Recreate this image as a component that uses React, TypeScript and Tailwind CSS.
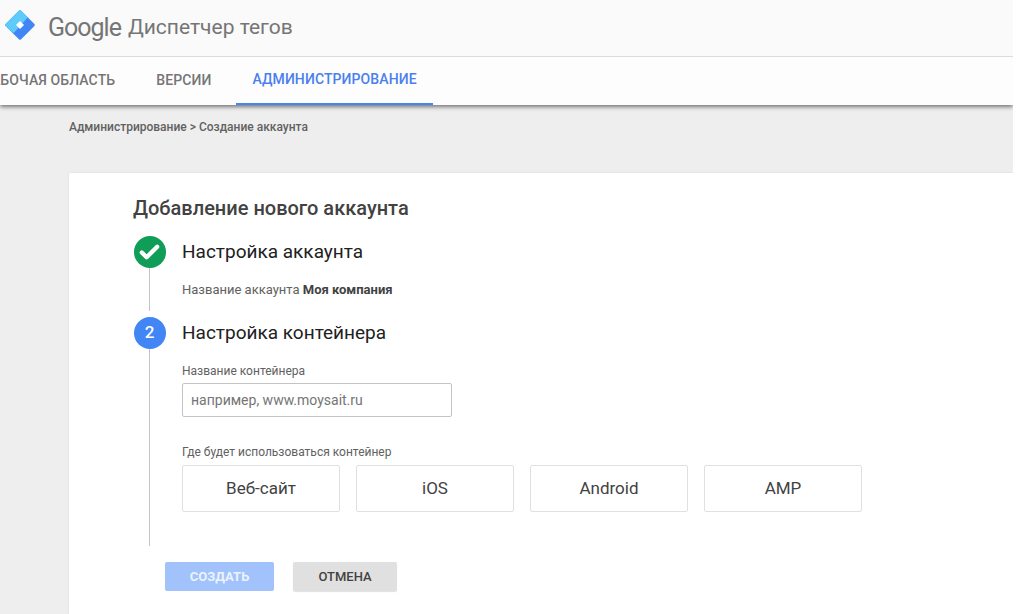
import React from 'react';
import { Check } from 'lucide-react';

const roboto = { fontFamily: 'Roboto, sans-serif' };

const tabs = [
  { name: 'РАБОЧАЯ ОБЛАСТЬ', active: false },
  { name: 'ВЕРСИИ', active: false },
  { name: 'АДМИНИСТРИРОВАНИЕ', active: true },
];

const targets = ['Веб-сайт', 'iOS', 'Android', 'AMP'];

const Logo = () => (
  <svg width="30" height="30" viewBox="0 0 30 30" className="shrink-0">
    <path d="M15 1.5 L28.5 15 L15 28.5 L1.5 15 Z" fill="#4285f4" stroke="#4285f4" strokeWidth="2.5" strokeLinejoin="round" />
    <path d="M15 1.5 L21 7.5 L8.5 21.5 L1.5 15 Z" fill="#5ecbfb" stroke="#5ecbfb" strokeWidth="2.5" strokeLinejoin="round" />
    <path d="M15 11 L19 15 L15 19 L11 15 Z" fill="#ffffff" />
  </svg>
);

const App: React.FC = () => {
  return (
    <div className="h-[614px] w-[1019px] overflow-hidden bg-white" style={roboto}>
      <div className="h-full w-[1013px] overflow-hidden bg-[#eeeeee] flex flex-col">
        {/* Header */}
        <header className="relative z-10 h-[105px] shrink-0 bg-[#fdfdfd] shadow-[0_2px_4px_rgba(0,0,0,0.5)]">
          <div className="h-[57px] flex items-start gap-[13px] pl-[5px] pt-[10px] bg-[#fafafa] border-b border-[#dcdcdc]">
            <Logo />
            <div className="h-[34px] flex items-center gap-[7px] text-[#757575]">
              <span className="text-[25px] tracking-[-1px] leading-none">Google</span>
              <span className="text-[21px] leading-none">Диспетчер тегов</span>
            </div>
          </div>
          <nav className="h-[48px] flex gap-[9px] -ml-[33px]">
            {tabs.map((tab) => (
              <a
                key={tab.name}
                className={`h-full px-4 flex items-center text-sm font-medium tracking-[0.1px] pb-[2px] ${
                  tab.active ? 'text-[#4a7ff0] border-b-2 border-[#4285f4]' : 'text-[#757575]'
                }`}
              >
                {tab.name}
              </a>
            ))}
          </nav>
        </header>

        {/* Breadcrumb */}
        <div className="h-[68px] shrink-0 pl-[69px] pt-[15px] text-xs font-medium leading-[14px] text-[#616161]">
          Администрирование &gt; Создание аккаунта
        </div>

        {/* Card */}
        <main className="ml-[69px] flex-1 bg-white rounded-tl-[2px] pl-[64px] shadow-[0_0_2px_rgba(0,0,0,0.12)]">
          <h1 className="pt-[23px] text-[20px] leading-[24px] font-medium text-[#424242]">Добавление нового аккаунта</h1>

          <section className="mt-4 flex gap-4">
            <div className="w-[33px] shrink-0 flex flex-col items-center">
              <div className="size-8 rounded-full bg-[#0f9d58] flex items-center justify-center">
                <Check size={23} strokeWidth={4.5} className="text-white" />
              </div>
              <div className="w-px h-[43px] bg-[#c4c4c4]" />
            </div>
            <div>
              <div className="h-8 flex items-center text-[19px] text-[#212121]">Настройка аккаунта</div>
              <p className="mt-[15px] text-[13px] leading-[14px] text-[#616161]">
                Название аккаунта <b className="font-bold text-[#424242]">Моя компания</b>
              </p>
            </div>
          </section>

          <section className="mt-[6px] flex gap-4">
            <div className="w-[33px] shrink-0 flex flex-col items-center">
              <div className="size-8 rounded-full bg-[#4285f4] flex items-center justify-center text-[17px] font-medium text-white">2</div>
              <div className="w-px h-[197px] bg-[#c4c4c4]" />
            </div>
            <div>
              <div className="h-8 flex items-center text-[19px] text-[#212121]">Настройка контейнера</div>
              <label className="block mt-[15px] text-xs leading-[14px] text-[#616161]">Название контейнера</label>
              <input
                placeholder="например, www.moysait.ru"
                className="mt-[5px] block w-[270px] h-[34px] px-2 border border-[#c4c4c4] rounded-[2px] text-sm outline-none placeholder:text-[#757575]"
              />
              <label className="block mt-[28px] text-xs leading-[14px] text-[#616161]">Где будет использоваться контейнер</label>
              <div className="mt-[6px] flex gap-4">
                {targets.map((t) => (
                  <button
                    key={t}
                    className="w-[158px] h-[47px] border border-[#e0e0e0] rounded-[2px] bg-white text-[17px] text-[#424242]"
                  >
                    {t}
                  </button>
                ))}
              </div>
            </div>
          </section>

          <div className="mt-4 ml-[32px] flex gap-[19px]">
            <button className="w-[109px] h-[29px] rounded-[2px] bg-[#a1c2fa] text-[13px] font-bold text-white/80">СОЗДАТЬ</button>
            <button className="w-[104px] h-[29px] rounded-[2px] bg-[#e0e0e0] text-[13px] font-medium text-[#424242] shadow-[0_1px_1px_rgba(0,0,0,0.12)]">ОТМЕНА</button>
          </div>
        </main>
      </div>
    </div>
  );
};

export default App;
